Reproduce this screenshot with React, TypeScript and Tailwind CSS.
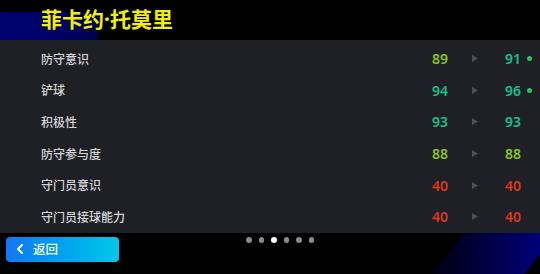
import { ChevronLeft } from 'lucide-react';

const stats = [
  { name: '防守意识', from: 89, to: 91, fromColor: 'text-[#8dc21f]', toColor: 'text-[#16c08a]', up: true },
  { name: '铲球', from: 94, to: 96, fromColor: 'text-[#16c08a]', toColor: 'text-[#16c08a]', up: true },
  { name: '积极性', from: 93, to: 93, fromColor: 'text-[#16c08a]', toColor: 'text-[#16c08a]', up: false },
  { name: '防守参与度', from: 88, to: 88, fromColor: 'text-[#8dc21f]', toColor: 'text-[#8dc21f]', up: false },
  { name: '守门员意识', from: 40, to: 40, fromColor: 'text-[#dc3a1c]', toColor: 'text-[#dc3a1c]', up: false },
  { name: '守门员接球能力', from: 40, to: 40, fromColor: 'text-[#dc3a1c]', toColor: 'text-[#dc3a1c]', up: false },
];

function StatRow({ s }: { s: (typeof stats)[number] }) {
  return (
    <div className="flex h-[31.6px] items-center">
      <div className="flex-1 pl-[41px] text-[12px] font-medium text-[#d6d6d8]">{s.name}</div>
      <div className="flex w-[120px] items-center font-['Noto_Sans',sans-serif] text-[14px] font-semibold">
        <span className={`ml-[5px] w-[30px] text-center ${s.fromColor}`}>{s.from}</span>
        <svg className="ml-[17px]" width="6" height="7" viewBox="0 0 6 7">
          <polygon points="0,0 6,3.5 0,7" fill="#4b4f5b" />
        </svg>
        <span className={`ml-[22px] w-[26px] text-center ${s.toColor}`}>{s.to}</span>
        {s.up && <span className="ml-[1px] h-[5px] w-[5px] rounded-full bg-[#22c55e]" />}
      </div>
    </div>
  );
}

export default function App() {
  return (
    <div className="relative h-[274px] w-[540px] overflow-hidden bg-black font-['Noto_Sans_CJK_SC',sans-serif]">
      {/* header glow strip */}
      <div className="absolute left-0 top-[12px] h-[28px] w-[98px] rounded-r-sm bg-gradient-to-r from-[#00006e] via-[#00006a] to-[#000050]" />
      {/* bottom right decoration */}
      <div className="absolute bottom-0 right-0 h-[41px] w-[108px] bg-gradient-to-r from-[#000010] to-[#00007a] [clip-path:polygon(30%_0,100%_0,100%_50%,86%_100%,0_100%)]" />

      <div className="relative flex h-[40px] items-center pl-[41px] pb-[2px]">
        <h1 className="text-[21px] font-bold leading-none text-[#f2f200]">
          菲卡约<span className="font-['Noto_Sans',sans-serif]">·</span>托莫里
        </h1>
      </div>

      <div className="relative bg-[#1f2026] pt-[3px]">
        {stats.map((s) => (
          <StatRow key={s.name} s={s} />
        ))}
      </div>

      <div className="relative flex h-[41px] items-start">
        <button className="ml-[6px] mt-[4px] flex h-[25px] w-[113px] items-center rounded-[4px] bg-gradient-to-r from-[#1577f2] to-[#02c8e8] pl-[6px] text-[12.5px] font-medium text-white">
          <ChevronLeft size={16} strokeWidth={3} />
          <span className="ml-[5px]">返回</span>
        </button>
        <div className="ml-[127px] mt-[4.5px] flex items-center gap-[7px]">
          <span className="h-[5.5px] w-[5.5px] rounded-full bg-[#8a8a8a]" />
          <span className="h-[5.5px] w-[5.5px] rounded-full bg-[#8a8a8a]" />
          <span className="h-[5.5px] w-[5.5px] rounded-full bg-white" />
          <span className="h-[5.5px] w-[5.5px] rounded-full bg-[#8a8a8a]" />
          <span className="h-[5.5px] w-[5.5px] rounded-full bg-[#8a8a8a]" />
          <span className="h-[5.5px] w-[5.5px] rounded-full bg-[#8a8a8a]" />
        </div>
      </div>
    </div>
  );
}
